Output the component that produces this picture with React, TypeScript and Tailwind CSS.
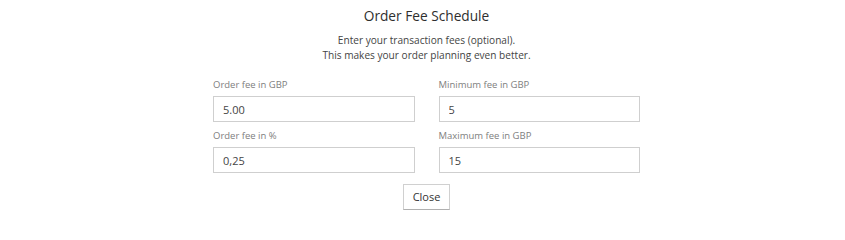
import { FC } from "react";

const Field: FC<{ label: string; value: string }> = ({ label, value }) => {
  return (
    <div className="flex flex-col">
      <label className="mb-[4px] h-[14px] text-[9.5px] leading-[14px] text-[#808080]">{label}</label>
      <input
        defaultValue={value}
        className="h-[26px] w-full border border-[#cfcfcf] bg-white px-[9px] text-[11px] text-[#444] outline-none"
      />
    </div>
  );
};

const App: FC = () => {
  return (
    <div className="h-[219px] w-full bg-white font-['Open_Sans',sans-serif]">
      <div className="flex flex-col items-center pl-[8px] pt-[6px]">
        <h2 className="text-[13.7px] leading-[20px] text-[#2e2e2e]">Order Fee Schedule</h2>
        <p className="mt-[7px] text-center text-[10.1px] leading-[15px] text-[#444]">
          Enter your transaction fees (optional).
          <br />
          This makes your order planning even better.
        </p>
        <div className="mt-[15px] grid w-[427px] grid-cols-2 gap-x-[24px] gap-y-[7px]">
          <Field label="Order fee in GBP" value="5.00" />
          <Field label="Minimum fee in GBP" value="5" />
          <Field label="Order fee in %" value="0,25" />
          <Field label="Maximum fee in GBP" value="15" />
        </div>
        <button className="mt-[11px] h-[26px] w-[47px] border border-[#d0d0d0] border-b-[#b0b0b0] bg-white text-[11px] text-[#333]">
          Close
        </button>
      </div>
    </div>
  );
};

export default App;
